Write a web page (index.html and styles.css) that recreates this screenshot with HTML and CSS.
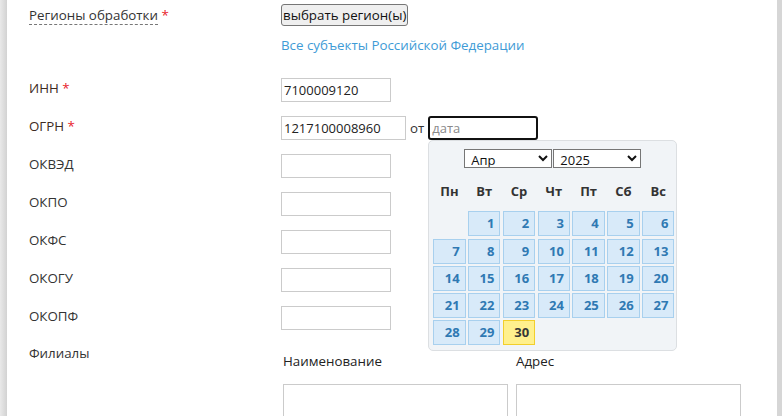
FILE: index.html
```html
<!DOCTYPE html>
<html lang="ru">
<head>
<meta charset="utf-8">
<title>Форма</title>
<link rel="stylesheet" href="styles.css">
</head>
<body>
<div class="page">
  <div class="form">
    <div class="row row-regions">
      <div class="label"><span class="dashed">Регионы обработки</span> <span class="req">*</span></div>
      <div class="field field-col">
        <button class="btn" type="button">выбрать регион(ы)</button>
        <a class="link" href="#">Все субъекты Российской Федерации</a>
      </div>
    </div>

    <div class="row row-first">
      <div class="label label-strong">ИНН <span class="req">*</span></div>
      <div class="field"><input class="inp" type="text" value="7100009120"></div>
    </div>

    <div class="row">
      <div class="label label-strong">ОГРН <span class="req">*</span></div>
      <div class="field field-inline">
        <input class="inp inp-wide" type="text" value="1217100008960">
        <span class="ot">от</span>
        <div class="date-wrap">
          <input class="inp inp-date" type="text" placeholder="дата">
          <div class="cal">
            <div class="cal-head">
              <select class="cal-sel">
                <option>Янв</option><option>Фев</option><option>Мар</option><option selected>Апр</option><option>Май</option><option>Июн</option><option>Июл</option><option>Авг</option><option>Сен</option><option>Окт</option><option>Ноя</option><option>Дек</option>
              </select>
              <select class="cal-sel">
                <option>2024</option><option selected>2025</option><option>2026</option>
              </select>
            </div>
            <div class="cal-grid">
              <div class="dh">Пн</div><div class="dh">Вт</div><div class="dh">Ср</div><div class="dh">Чт</div><div class="dh">Пт</div><div class="dh">Сб</div><div class="dh">Вс</div>
              <div class="empty"></div>
              <a class="d" href="#">1</a><a class="d" href="#">2</a><a class="d" href="#">3</a><a class="d" href="#">4</a><a class="d" href="#">5</a><a class="d" href="#">6</a>
              <a class="d" href="#">7</a><a class="d" href="#">8</a><a class="d" href="#">9</a><a class="d" href="#">10</a><a class="d" href="#">11</a><a class="d" href="#">12</a><a class="d" href="#">13</a>
              <a class="d" href="#">14</a><a class="d" href="#">15</a><a class="d" href="#">16</a><a class="d" href="#">17</a><a class="d" href="#">18</a><a class="d" href="#">19</a><a class="d" href="#">20</a>
              <a class="d" href="#">21</a><a class="d" href="#">22</a><a class="d" href="#">23</a><a class="d" href="#">24</a><a class="d" href="#">25</a><a class="d" href="#">26</a><a class="d" href="#">27</a>
              <a class="d" href="#">28</a><a class="d" href="#">29</a><a class="d today" href="#">30</a>
            </div>
          </div>
        </div>
      </div>
    </div>

    <div class="row">
      <div class="label">ОКВЭД</div>
      <div class="field"><input class="inp" type="text"></div>
    </div>
    <div class="row">
      <div class="label">ОКПО</div>
      <div class="field"><input class="inp" type="text"></div>
    </div>
    <div class="row">
      <div class="label">ОКФС</div>
      <div class="field"><input class="inp" type="text"></div>
    </div>
    <div class="row">
      <div class="label">ОКОГУ</div>
      <div class="field"><input class="inp" type="text"></div>
    </div>
    <div class="row">
      <div class="label">ОКОПФ</div>
      <div class="field"><input class="inp" type="text"></div>
    </div>

    <div class="row row-branches">
      <div class="label label-top">Филиалы</div>
      <div class="field branches">
        <div class="bcol">
          <div class="bhead">Наименование</div>
          <textarea class="ta"></textarea>
        </div>
        <div class="bcol">
          <div class="bhead">Адрес</div>
          <textarea class="ta"></textarea>
        </div>
      </div>
    </div>
  </div>
</div>
</body>
</html>
```

FILE: styles.css
```css
html, body {
  margin: 0;
  padding: 0;
  height: 100%;
}
body {
  background: linear-gradient(to right, #e9e9e9 0, #d2d2d2 7px, #ffffff 7px, #ffffff 777px, #d6d6d6 777px);
  font-family: "Open Sans", "Noto Sans", sans-serif;
  font-size: 13.33px;
  line-height: 18px;
  color: #333;
  overflow: hidden;
}
.page {
  margin-left: 7px;
  width: 770px;
  height: 416px;
  overflow: hidden;
}
.form {
  padding: 4px 0 0 22px;
}
.row {
  display: flex;
  align-items: flex-start;
  margin-top: 14px;
}
.row-regions {
  margin-top: 0;
  align-items: baseline;
}
.row-first {
  margin-top: 24px;
}
.label {
  width: 252px;
  flex: none;
  color: #333;
  padding-top: 1px;
}
.row-regions .label {
  padding-top: 0;
}
.label-top {
  padding-top: 0;
}
.label-strong {
  color: #3d2a22;
}
.dashed {
  border-bottom: 1px dashed #777;
}
.req {
  color: #e8202a;
}
.field-col {
  display: flex;
  flex-direction: column;
  align-items: flex-start;
}
.btn {
  font-family: "Open Sans", "Noto Sans", sans-serif;
  font-size: 13.33px;
  line-height: 18px;
  height: 22px;
  padding: 1px 1px;
  border: 1px solid #767676;
  border-radius: 3px;
  background: #efefef;
  color: #111;
  box-sizing: border-box;
}
.link {
  margin-top: 10px;
  color: #3e9bd6;
  text-decoration: none;
}
.inp {
  box-sizing: border-box;
  width: 110px;
  height: 24px;
  padding: 1px 2px;
  border: 1px solid #cbcbcb;
  border-radius: 0;
  font-family: "Open Sans", "Noto Sans", sans-serif;
  font-size: 13px;
  color: #222;
  background: #fff;
  outline: none;
}
.inp-wide {
  width: 125px;
}
.field-inline {
  display: flex;
  align-items: center;
  gap: 4px;
}
.ot {
  color: #333;
}
.date-wrap {
  position: relative;
  display: flex;
}
.inp-date {
  width: 110px;
  border: 2px solid #111;
  border-radius: 3px;
  padding: 0 2px;
}
.inp-date::placeholder {
  color: #8a8a8a;
}
.cal {
  position: absolute;
  left: 0;
  top: 100%;
  width: 249px;
  box-sizing: border-box;
  padding: 8px 4px 5px 4px;
  background: #f1f4f7;
  border: 1px solid #dcdfe2;
  border-radius: 5px;
  z-index: 5;
  font-size: 13px;
}
.cal-head {
  display: flex;
  justify-content: center;
  gap: 1px;
}
.cal-sel {
  width: 88px;
  height: 19px;
  box-sizing: border-box;
  font-family: "Open Sans", "Noto Sans", sans-serif;
  font-size: 13px;
  padding: 0 2px;
  border: 1px solid #767676;
  border-radius: 0;
  background: #fff;
  color: #111;
}
.cal-grid {
  display: grid;
  grid-template-columns: repeat(7, 32.3px);
  grid-template-rows: 36px;
  grid-auto-rows: 25px;
  column-gap: 2.5px;
  row-gap: 2.25px;
  margin-top: 5px;
}
.dh {
  grid-row: 1;
  height: 36px;
  line-height: 36px;
  text-align: center;
  font-weight: bold;
  color: #333;
}
.d {
  display: block;
  box-sizing: border-box;
  height: 25px;
  line-height: 23px;
  padding-right: 5px;
  text-align: right;
  font-weight: bold;
  color: #2f79b3;
  text-decoration: none;
  background: #d8eaf9;
  border: 1px solid #a8d0ee;
}
.d.today {
  background: #fff08d;
  border-color: #f2cf2c;
  color: #363636;
}
.branches {
  display: flex;
  gap: 8px;
  padding-top: 8px;
  padding-left: 2px;
}
.bcol {
  display: flex;
  flex-direction: column;
}
.bhead {
  color: #222;
}
.ta {
  margin-top: 14px;
  width: 225px;
  height: 60px;
  box-sizing: border-box;
  border: 1px solid #cbcbcb;
  resize: none;
  font-family: "Open Sans", "Noto Sans", sans-serif;
  font-size: 13px;
}
```
